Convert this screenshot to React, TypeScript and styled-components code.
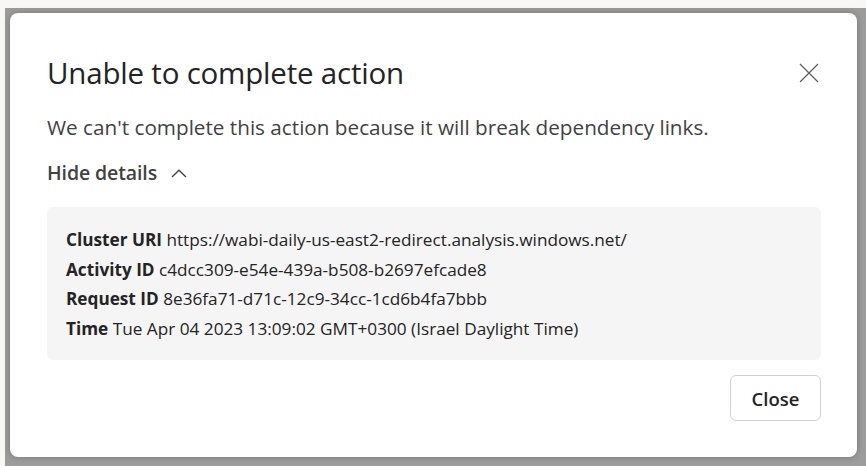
import React from 'react'
import styled, { createGlobalStyle } from 'styled-components'

const GlobalStyle = createGlobalStyle`
    html, body {
        margin: 0;
        padding: 0;
        background: #f8f7f5;
    }
    body {
        font-family: "Open Sans", "Noto Sans", Arial, sans-serif;
        -webkit-font-smoothing: antialiased;
    }
`

interface DetailItem {
    label: string,
    value: string
}

const details: DetailItem[] = [
    { label: 'Cluster URI', value: 'https://wabi-daily-us-east2-redirect.analysis.windows.net/' },
    { label: 'Activity ID', value: 'c4dcc309-e54e-439a-b508-b2697efcade8' },
    { label: 'Request ID', value: '8e36fa71-d71c-12c9-34cc-1cd6b4fa7bbb' },
    { label: 'Time', value: 'Tue Apr 04 2023 13:09:02 GMT+0300 (Israel Daylight Time)' },
]

const App: React.FC = () => {
    return (
        <>
            <GlobalStyle />
            <Page>
                <Overlay>
                    <Dialog role='dialog' aria-labelledby='dlg-title'>
                        <TitleRow>
                            <Title id='dlg-title'>Unable to complete action</Title>
                            <IconButton aria-label='Close dialog'>
                                <svg width='20' height='20' viewBox='0 0 20 20'>
                                    <path d='M1 1 L19 19 M19 1 L1 19' stroke='#616161' strokeWidth='1.3' fill='none' />
                                </svg>
                            </IconButton>
                        </TitleRow>
                        <Message>We can't complete this action because it will break dependency links.</Message>
                        <Toggle>
                            Hide details
                            <svg width='16' height='9' viewBox='0 0 16 9'>
                                <path d='M1 8 L8 1.2 L15 8' stroke='#424242' strokeWidth='1.3' fill='none' />
                            </svg>
                        </Toggle>
                        <DetailsBox>
                            {details.map((d) => (
                                <DetailLine key={d.label}>
                                    <b>{d.label}</b> {d.value}
                                </DetailLine>
                            ))}
                        </DetailsBox>
                        <Actions>
                            <Button>Close</Button>
                        </Actions>
                    </Dialog>
                </Overlay>
            </Page>
        </>
    )
}

const Page = styled.div`
    height: 466px;
    padding: 8px 0 0 5px;
    box-sizing: border-box;
    display: flex;
`

const Overlay = styled.div`
    flex: 1;
    background: #9c9c9c;
    padding: 5px 9px 9px 5px;
    display: flex;
`

const Dialog = styled.div`
    flex: 1;
    background: #ffffff;
    border-radius: 8px;
    box-shadow: 0 0 6px rgba(0, 0, 0, 0.25);
    padding: 36px 36px 36px 37px;
    display: flex;
    flex-direction: column;
`

const TitleRow = styled.div`
    display: flex;
    align-items: center;
    justify-content: space-between;
    height: 48px;
`

const Title = styled.h2`
    margin: 0;
    font-size: 29.5px;
    font-weight: 500;
    line-height: 48px;
    color: #242424;
    letter-spacing: -0.2px;
`

const IconButton = styled.button`
    border: none;
    background: transparent;
    padding: 0;
    margin-right: 2px;
    width: 20px;
    height: 20px;
    display: flex;
    cursor: pointer;
`

const Message = styled.p`
    margin: 17px 0 0;
    font-size: 20.7px;
    line-height: 26px;
    color: #424242;
    letter-spacing: 0;
    white-space: nowrap;
`

const Toggle = styled.div`
    margin-top: 20px;
    display: flex;
    align-items: center;
    gap: 14px;
    font-size: 19.5px;
    font-weight: 600;
    line-height: 26px;
    color: #424242;
    letter-spacing: -0.1px;
`

const DetailsBox = styled.div`
    margin-top: 21px;
    background: #f5f5f5;
    border-radius: 6px;
    padding: 18px 19px 17px;
`

const DetailLine = styled.div`
    font-size: 17.2px;
    line-height: 29.5px;
    color: #242424;
    white-space: nowrap;

    b {
        font-weight: 700;
    }
`

const Actions = styled.div`
    margin-top: 15px;
    display: flex;
    justify-content: flex-end;
`

const Button = styled.button`
    height: 46px;
    width: 91px;
    border: 1px solid #d1d1d1;
    border-radius: 6px;
    background: #ffffff;
    font-family: inherit;
    font-size: 18.5px;
    font-weight: 600;
    color: #242424;
    cursor: pointer;
`

export default App
